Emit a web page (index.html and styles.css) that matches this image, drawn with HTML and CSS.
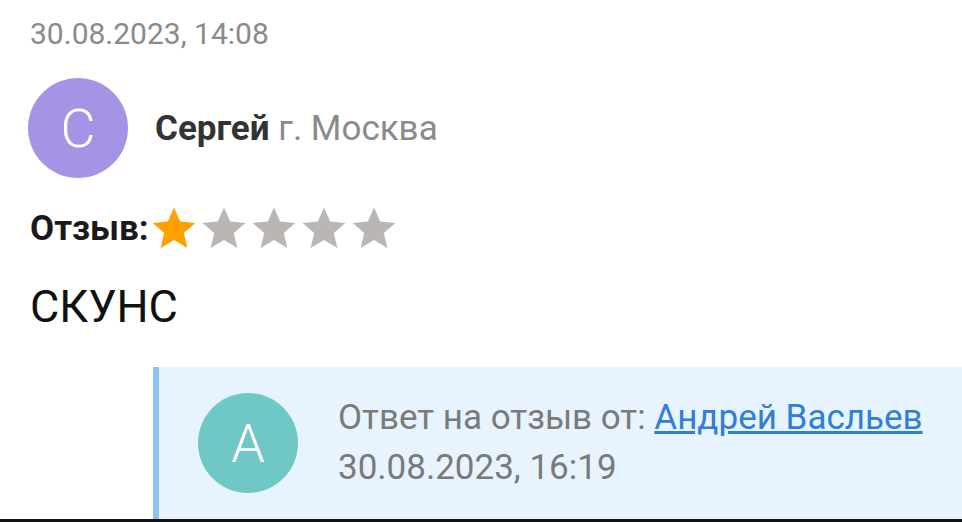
FILE: index.html
```html
<!DOCTYPE html>
<html lang="ru">
<head>
    <meta charset="UTF-8">
    <meta name="viewport" content="width=device-width, initial-scale=1.0">
    <title>Отзыв</title>
    <link rel="stylesheet" href="styles.css">
</head>
<body>
    <div class="review">
        <div class="review-date">30.08.2023, 14:08</div>

        <div class="author">
            <div class="avatar avatar-purple">С</div>
            <div class="author-info">
                <span class="author-name">Сергей</span>
                <span class="author-city">г. Москва</span>
            </div>
        </div>

        <div class="rating">
            <span class="rating-label">Отзыв:</span>
            <span class="stars">
                <svg class="star active" viewBox="0 0 24 24"><path d="M12 1.8l3.1 7 7.6.7-5.8 5 1.8 7.5L12 18l-6.7 4 1.8-7.5-5.8-5 7.6-.7z"/></svg>
                <svg class="star" viewBox="0 0 24 24"><path d="M12 1.8l3.1 7 7.6.7-5.8 5 1.8 7.5L12 18l-6.7 4 1.8-7.5-5.8-5 7.6-.7z"/></svg>
                <svg class="star" viewBox="0 0 24 24"><path d="M12 1.8l3.1 7 7.6.7-5.8 5 1.8 7.5L12 18l-6.7 4 1.8-7.5-5.8-5 7.6-.7z"/></svg>
                <svg class="star" viewBox="0 0 24 24"><path d="M12 1.8l3.1 7 7.6.7-5.8 5 1.8 7.5L12 18l-6.7 4 1.8-7.5-5.8-5 7.6-.7z"/></svg>
                <svg class="star" viewBox="0 0 24 24"><path d="M12 1.8l3.1 7 7.6.7-5.8 5 1.8 7.5L12 18l-6.7 4 1.8-7.5-5.8-5 7.6-.7z"/></svg>
            </span>
        </div>

        <div class="review-text">СКУНС</div>

        <div class="reply">
            <div class="avatar avatar-teal">А</div>
            <div class="reply-info">
                <div class="reply-from">Ответ на отзыв от: <a href="#">Андрей Васльев</a></div>
                <div class="reply-date">30.08.2023, 16:19</div>
            </div>
        </div>
    </div>
    <div class="bottom-rule"></div>
</body>
</html>
```

FILE: styles.css
```css
body {
    margin: 0;
    background-color: #fff;
    font-family: Roboto, "Noto Sans", Arial, sans-serif;
    overflow: hidden;
}
.review {
    padding: 16px 0 0 28px;
}
.review-date {
    font-size: 30px;
    line-height: 36px;
    color: #8a8a8a;
    margin-left: 2px;
}
.author {
    display: flex;
    align-items: center;
    gap: 27px;
    margin-top: 26px;
}
.avatar {
    width: 100px;
    height: 100px;
    border-radius: 50%;
    flex-shrink: 0;
    display: flex;
    align-items: center;
    justify-content: center;
    color: #fff;
    font-size: 54px;
    font-weight: 300;
}
.avatar-purple {
    background-color: #a594e6;
}
.avatar-teal {
    background-color: #6fc8c6;
}
.author-info {
    font-size: 35px;
    color: #8a8a8a;
}
.author-name {
    font-weight: bold;
    color: #333;
}
.rating {
    display: flex;
    align-items: center;
    margin-top: 26px;
    margin-left: 2px;
}
.rating-label {
    font-size: 35px;
    font-weight: bold;
    color: #1a1a1a;
}
.stars {
    display: flex;
    margin-left: 1px;
}
.star {
    width: 48px;
    height: 48px;
    margin-right: 2px;
    fill: #b9b6b3;
}
.star.active {
    fill: #ffa000;
}
.review-text {
    font-size: 45px;
    line-height: 54px;
    color: #111;
    margin-top: 28px;
    margin-left: 2px;
}
.reply {
    display: flex;
    align-items: center;
    gap: 40px;
    margin-top: 33px;
    margin-left: 125px;
    padding: 26px 0 26px 39px;
    background-color: #e7f4fd;
    border-left: 6px solid #8dc4ef;
}
.reply-info {
    font-size: 35px;
    line-height: 50px;
    color: #7a7a7a;
}
.reply-from a {
    color: #2f7fd8;
}
.bottom-rule {
    height: 3px;
    background-color: #111;
}
```
